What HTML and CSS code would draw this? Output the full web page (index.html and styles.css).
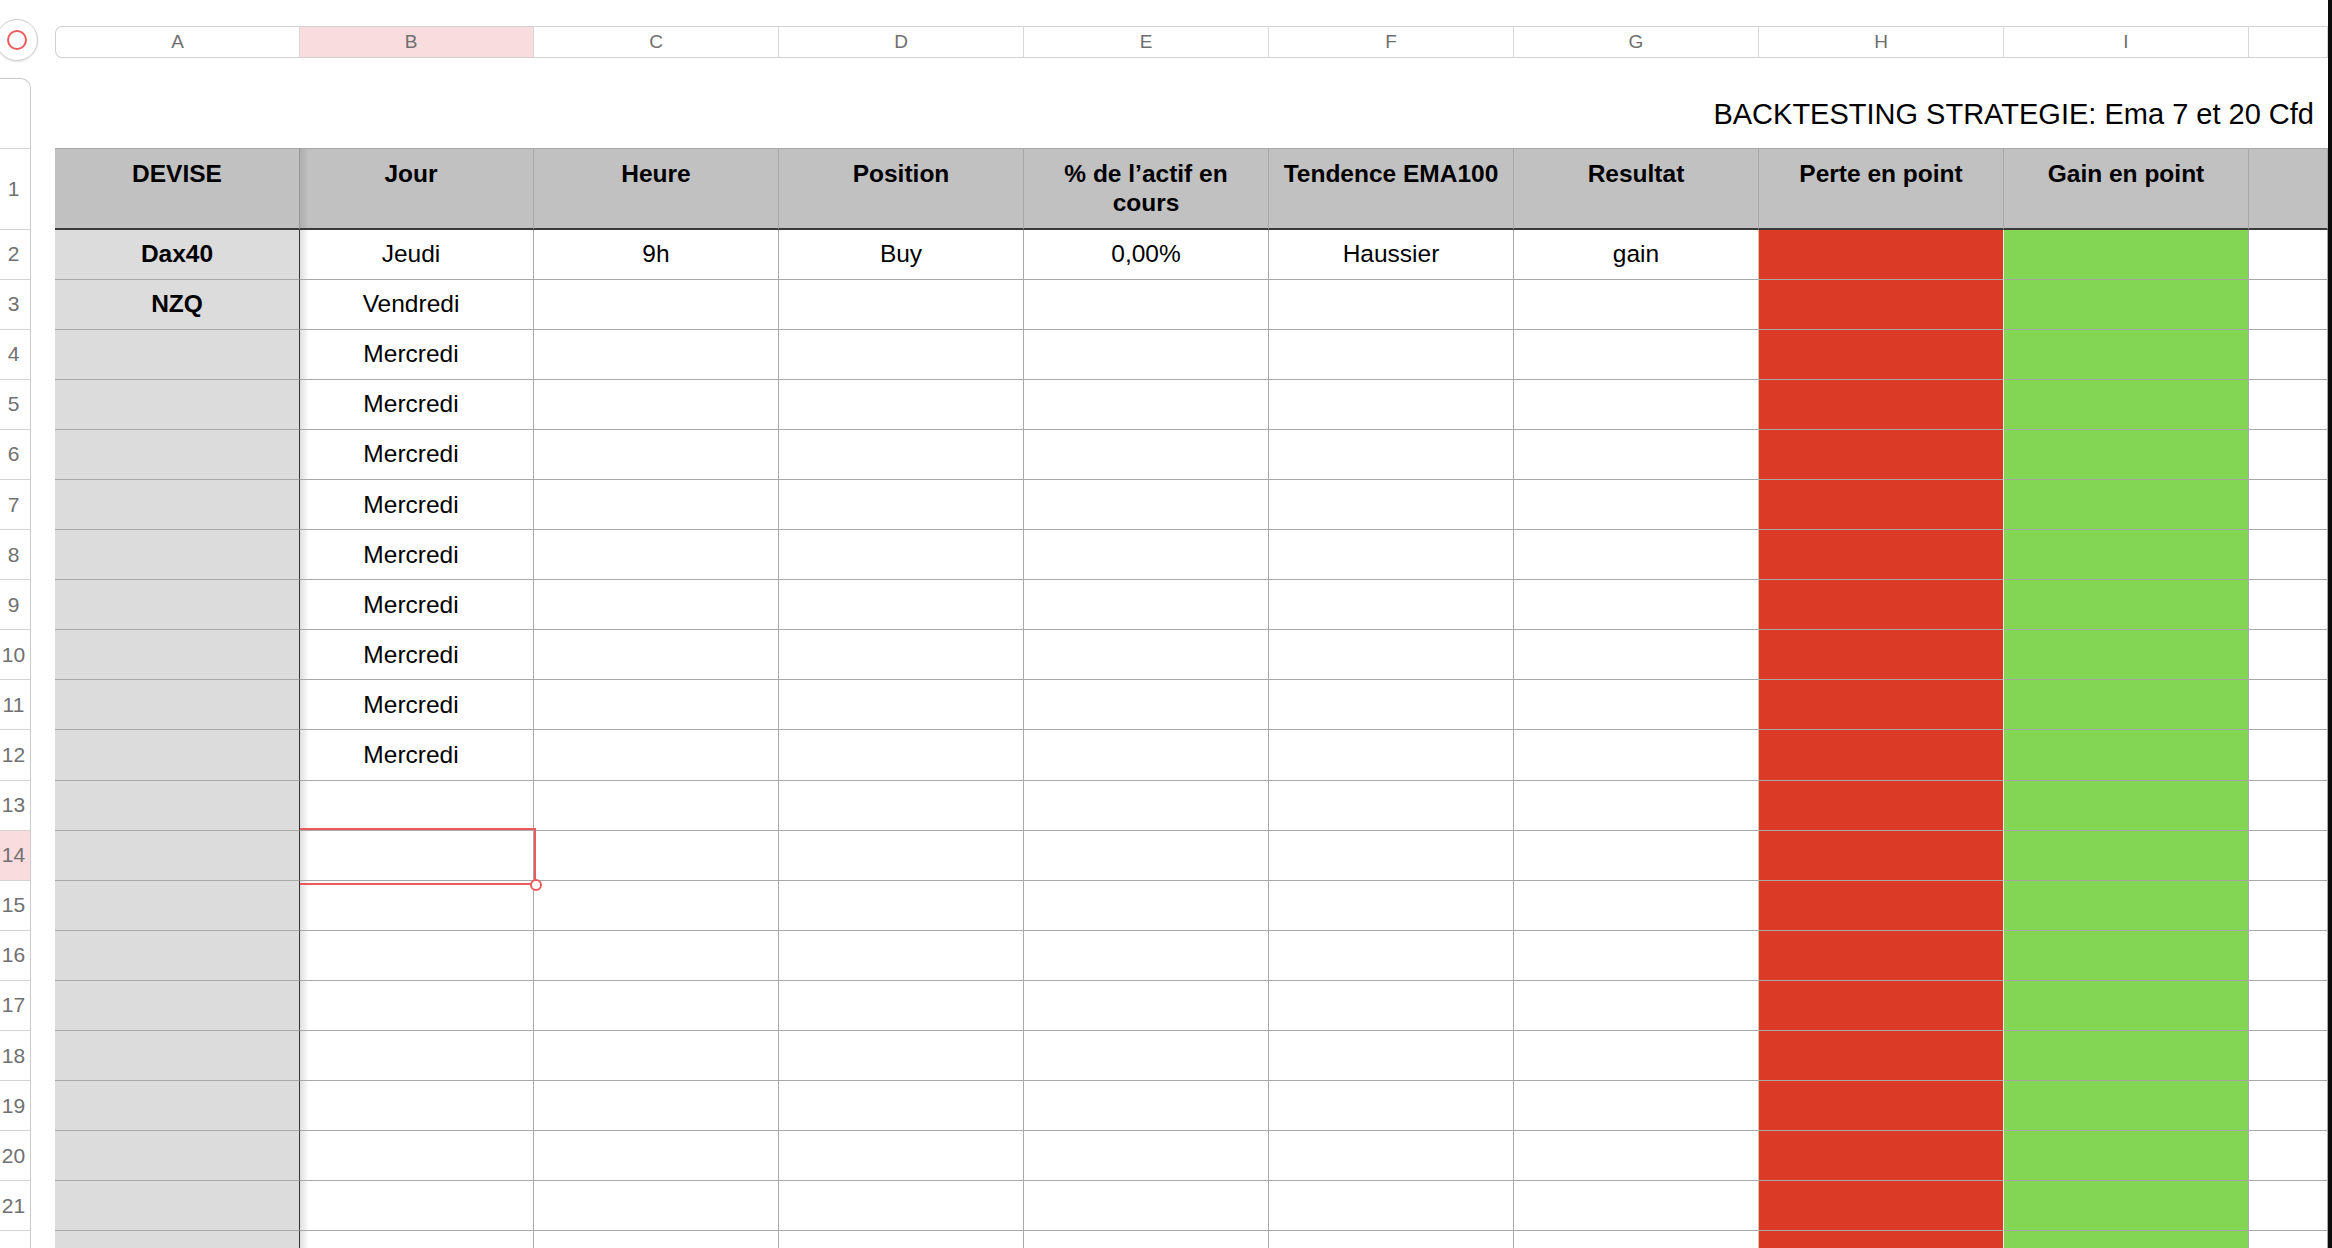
FILE: index.html
```html
<!DOCTYPE html>
<html lang="fr">
<head>
  <meta charset="UTF-8">
  <title>Backtesting</title>
  <link rel="stylesheet" href="styles.css">
</head>
<body>

  <div class="page">
    <div class="sheet">

      <!-- column letters -->
      <div class="row top">
        <div class="gut"><div class="corner"><span class="ring"></span></div></div>
        <div class="cells colbar">
          <div>A</div><div class="on">B</div><div>C</div><div>D</div><div>E</div>
          <div>F</div><div>G</div><div>H</div><div>I</div><div></div>
        </div>
      </div>

      <div class="row title-row">
        <div class="gut cap"></div>
        <div class="title">BACKTESTING STRATEGIE: Ema 7 et 20 Cfd</div>
      </div>

      <!-- header row -->
      <div class="row head">
        <div class="num">1</div>
        <div class="cells">
          <div class="c a">DEVISE</div>
          <div class="c b">Jour</div>
          <div class="c">Heure</div>
          <div class="c">Position</div>
          <div class="c">% de l’actif en cours</div>
          <div class="c">Tendence EMA100</div>
          <div class="c">Resultat</div>
          <div class="c">Perte en point</div>
          <div class="c">Gain en point</div>
          <div class="c"></div>
        </div>
      </div>

      <div class="row">
        <div class="num">2</div>
        <div class="cells">
          <div class="c a">Dax40</div><div class="c b">Jeudi</div><div class="c">9h</div><div class="c">Buy</div><div class="c">0,00%</div>
          <div class="c">Haussier</div><div class="c g">gain</div><div class="c h"></div><div class="c i"></div><div class="c"></div>
        </div>
      </div>
      <div class="row">
        <div class="num">3</div>
        <div class="cells">
          <div class="c a">NZQ</div><div class="c b">Vendredi</div><div class="c"></div><div class="c"></div><div class="c"></div>
          <div class="c"></div><div class="c g"></div><div class="c h"></div><div class="c i"></div><div class="c"></div>
        </div>
      </div>
      <div class="row">
        <div class="num">4</div>
        <div class="cells">
          <div class="c a"></div><div class="c b">Mercredi</div><div class="c"></div><div class="c"></div><div class="c"></div>
          <div class="c"></div><div class="c g"></div><div class="c h"></div><div class="c i"></div><div class="c"></div>
        </div>
      </div>
      <div class="row">
        <div class="num">5</div>
        <div class="cells">
          <div class="c a"></div><div class="c b">Mercredi</div><div class="c"></div><div class="c"></div><div class="c"></div>
          <div class="c"></div><div class="c g"></div><div class="c h"></div><div class="c i"></div><div class="c"></div>
        </div>
      </div>
      <div class="row">
        <div class="num">6</div>
        <div class="cells">
          <div class="c a"></div><div class="c b">Mercredi</div><div class="c"></div><div class="c"></div><div class="c"></div>
          <div class="c"></div><div class="c g"></div><div class="c h"></div><div class="c i"></div><div class="c"></div>
        </div>
      </div>
      <div class="row">
        <div class="num">7</div>
        <div class="cells">
          <div class="c a"></div><div class="c b">Mercredi</div><div class="c"></div><div class="c"></div><div class="c"></div>
          <div class="c"></div><div class="c g"></div><div class="c h"></div><div class="c i"></div><div class="c"></div>
        </div>
      </div>
      <div class="row">
        <div class="num">8</div>
        <div class="cells">
          <div class="c a"></div><div class="c b">Mercredi</div><div class="c"></div><div class="c"></div><div class="c"></div>
          <div class="c"></div><div class="c g"></div><div class="c h"></div><div class="c i"></div><div class="c"></div>
        </div>
      </div>
      <div class="row">
        <div class="num">9</div>
        <div class="cells">
          <div class="c a"></div><div class="c b">Mercredi</div><div class="c"></div><div class="c"></div><div class="c"></div>
          <div class="c"></div><div class="c g"></div><div class="c h"></div><div class="c i"></div><div class="c"></div>
        </div>
      </div>
      <div class="row">
        <div class="num">10</div>
        <div class="cells">
          <div class="c a"></div><div class="c b">Mercredi</div><div class="c"></div><div class="c"></div><div class="c"></div>
          <div class="c"></div><div class="c g"></div><div class="c h"></div><div class="c i"></div><div class="c"></div>
        </div>
      </div>
      <div class="row">
        <div class="num">11</div>
        <div class="cells">
          <div class="c a"></div><div class="c b">Mercredi</div><div class="c"></div><div class="c"></div><div class="c"></div>
          <div class="c"></div><div class="c g"></div><div class="c h"></div><div class="c i"></div><div class="c"></div>
        </div>
      </div>
      <div class="row">
        <div class="num">12</div>
        <div class="cells">
          <div class="c a"></div><div class="c b">Mercredi</div><div class="c"></div><div class="c"></div><div class="c"></div>
          <div class="c"></div><div class="c g"></div><div class="c h"></div><div class="c i"></div><div class="c"></div>
        </div>
      </div>
      <div class="row">
        <div class="num">13</div>
        <div class="cells">
          <div class="c a"></div><div class="c b"></div><div class="c"></div><div class="c"></div><div class="c"></div>
          <div class="c"></div><div class="c g"></div><div class="c h"></div><div class="c i"></div><div class="c"></div>
        </div>
      </div>
      <div class="row">
        <div class="num on">14</div>
        <div class="cells">
          <div class="c a"></div><div class="c b sel"></div><div class="c"></div><div class="c"></div><div class="c"></div>
          <div class="c"></div><div class="c g"></div><div class="c h"></div><div class="c i"></div><div class="c"></div>
        </div>
      </div>
      <div class="row">
        <div class="num">15</div>
        <div class="cells">
          <div class="c a"></div><div class="c b"></div><div class="c"></div><div class="c"></div><div class="c"></div>
          <div class="c"></div><div class="c g"></div><div class="c h"></div><div class="c i"></div><div class="c"></div>
        </div>
      </div>
      <div class="row">
        <div class="num">16</div>
        <div class="cells">
          <div class="c a"></div><div class="c b"></div><div class="c"></div><div class="c"></div><div class="c"></div>
          <div class="c"></div><div class="c g"></div><div class="c h"></div><div class="c i"></div><div class="c"></div>
        </div>
      </div>
      <div class="row">
        <div class="num">17</div>
        <div class="cells">
          <div class="c a"></div><div class="c b"></div><div class="c"></div><div class="c"></div><div class="c"></div>
          <div class="c"></div><div class="c g"></div><div class="c h"></div><div class="c i"></div><div class="c"></div>
        </div>
      </div>
      <div class="row">
        <div class="num">18</div>
        <div class="cells">
          <div class="c a"></div><div class="c b"></div><div class="c"></div><div class="c"></div><div class="c"></div>
          <div class="c"></div><div class="c g"></div><div class="c h"></div><div class="c i"></div><div class="c"></div>
        </div>
      </div>
      <div class="row">
        <div class="num">19</div>
        <div class="cells">
          <div class="c a"></div><div class="c b"></div><div class="c"></div><div class="c"></div><div class="c"></div>
          <div class="c"></div><div class="c g"></div><div class="c h"></div><div class="c i"></div><div class="c"></div>
        </div>
      </div>
      <div class="row">
        <div class="num">20</div>
        <div class="cells">
          <div class="c a"></div><div class="c b"></div><div class="c"></div><div class="c"></div><div class="c"></div>
          <div class="c"></div><div class="c g"></div><div class="c h"></div><div class="c i"></div><div class="c"></div>
        </div>
      </div>
      <div class="row">
        <div class="num">21</div>
        <div class="cells">
          <div class="c a"></div><div class="c b"></div><div class="c"></div><div class="c"></div><div class="c"></div>
          <div class="c"></div><div class="c g"></div><div class="c h"></div><div class="c i"></div><div class="c"></div>
        </div>
      </div>
      <div class="row">
        <div class="num"></div>
        <div class="cells">
          <div class="c a"></div><div class="c b"></div><div class="c"></div><div class="c"></div><div class="c"></div>
          <div class="c"></div><div class="c g"></div><div class="c h"></div><div class="c i"></div><div class="c"></div>
        </div>
      </div>

    </div>
    <div class="edge"></div>
  </div>

</body>
</html>
```

FILE: styles.css
```css
body {
  margin: 0;
  background: #fff;
  font-family: "Liberation Sans", Arial, sans-serif;
  color: #111;
  overflow: hidden;
}

.page {
  display: flex;
  width: 2332px;
  height: 1248px;
  overflow: hidden;
}

.sheet {
  flex: 1;
  min-width: 0;
}

.edge {
  width: 4px;
  background: #0c0c0c;
}

.row {
  display: flex;
  gap: 24px;
  height: 50.1px;
}

.cells {
  flex: 1;
  display: grid;
  grid-template-columns: 245px 234px repeat(7, 245px) 1fr;
}

/* row numbers on the left */
.gut,
.num {
  width: 31px;
  flex: none;
  box-sizing: border-box;
}

.num {
  display: flex;
  align-items: center;
  justify-content: center;
  padding-right: 3px;
  border-right: 1px solid #cbcbcb;
  border-bottom: 1px solid #d4d4d4;
  font-size: 21px;
  color: #707070;
}

.num.on {
  background: #f9dcdd;
}

.gut.cap {
  margin-top: 20px;
  height: 70px;
  border-top: 1px solid #cbcbcb;
  border-right: 1px solid #cbcbcb;
  border-radius: 0 10px 0 0;
}

/* top bar */
.row.top {
  height: 58px;
  align-items: flex-start;
}

.corner {
  position: relative;
  width: 42px;
  height: 42px;
  margin: 19px 0 0 -4px;
  box-sizing: border-box;
  border: 1px solid #cfcfcf;
  border-radius: 50%;
  background: #fff;
  box-shadow: 0 1px 2px rgba(0, 0, 0, 0.12);
  display: flex;
  align-items: center;
  justify-content: center;
}

.ring {
  width: 20px;
  height: 20px;
  box-sizing: border-box;
  border: 2px solid #ec5b5b;
  border-radius: 50%;
}

.colbar {
  margin-top: 26px;
  height: 32px;
}

.colbar div {
  box-sizing: border-box;
  border-top: 1px solid #d0d0d0;
  border-bottom: 1px solid #d0d0d0;
  border-right: 1px solid #d8d8d8;
  display: flex;
  align-items: center;
  justify-content: center;
  font-size: 19px;
  color: #6f6f6f;
}

.colbar div:first-child {
  border-left: 1px solid #d0d0d0;
  border-radius: 7px 0 0 7px;
}

/* column B runs partly under the frozen column A */
.colbar .on {
  background: #f9dcdd;
  padding-right: 11px;
}

/* title */
.row.title-row {
  height: 90px;
}

.title {
  flex: 1;
  padding: 39px 14px 0 0;
  text-align: right;
  font-size: 29px;
  line-height: 34px;
  color: #000;
}

/* cells */
.c {
  box-sizing: border-box;
  border-right: 1px solid #a8a8a8;
  border-bottom: 1px solid #a8a8a8;
  display: flex;
  align-items: center;
  justify-content: center;
  font-size: 24.5px;
  color: #000;
}

.c.a {
  background: #dcdcdc;
  border-right-color: #333;
  font-weight: bold;
}

.c.b {
  padding-right: 11px;
  background: linear-gradient(to right, rgba(0, 0, 0, 0.13), rgba(0, 0, 0, 0) 9px), #fff;
}

.c.g {
  border-right-color: #d8c2a6;
}

.c.h {
  background: #db3a26;
  border-right-color: #f1ede2;
}

.c.i {
  background: #83d654;
}

/* header row */
.row.head {
  height: 81.5px;
}

.row.head .num {
  border-top: 1px solid #d4d4d4;
}

.row.head .c {
  align-items: flex-start;
  padding: 11px 8px 0;
  text-align: center;
  line-height: 28.5px;
  font-weight: bold;
  background: #c0c1c0;
  border-top: 1px solid #a6a6a6;
  border-bottom: 2px solid #3a3a3a;
}

.row.head .c.a {
  border-right-color: #9a9a9a;
}

.row.head .c.b {
  padding-right: 19px;
  background: linear-gradient(to right, rgba(0, 0, 0, 0.1), rgba(0, 0, 0, 0) 9px), #c0c1c0;
}

.row.head .c.g {
  border-right-color: #a6a6a6;
}

.row.head .c.h {
  border-right-color: #a6a6a6;
}

/* selected cell */
.sel {
  position: relative;
  z-index: 2;
}

.sel::before {
  content: "";
  position: absolute;
  top: -3px;
  bottom: -5px;
  left: 0;
  right: -3px;
  border: 2px solid #e95b5b;
  border-left: 0;
}

.sel::after {
  content: "";
  position: absolute;
  right: -9px;
  bottom: -11px;
  width: 12px;
  height: 12px;
  box-sizing: border-box;
  border: 2px solid #e95b5b;
  border-radius: 50%;
  background: #fff;
}
```
